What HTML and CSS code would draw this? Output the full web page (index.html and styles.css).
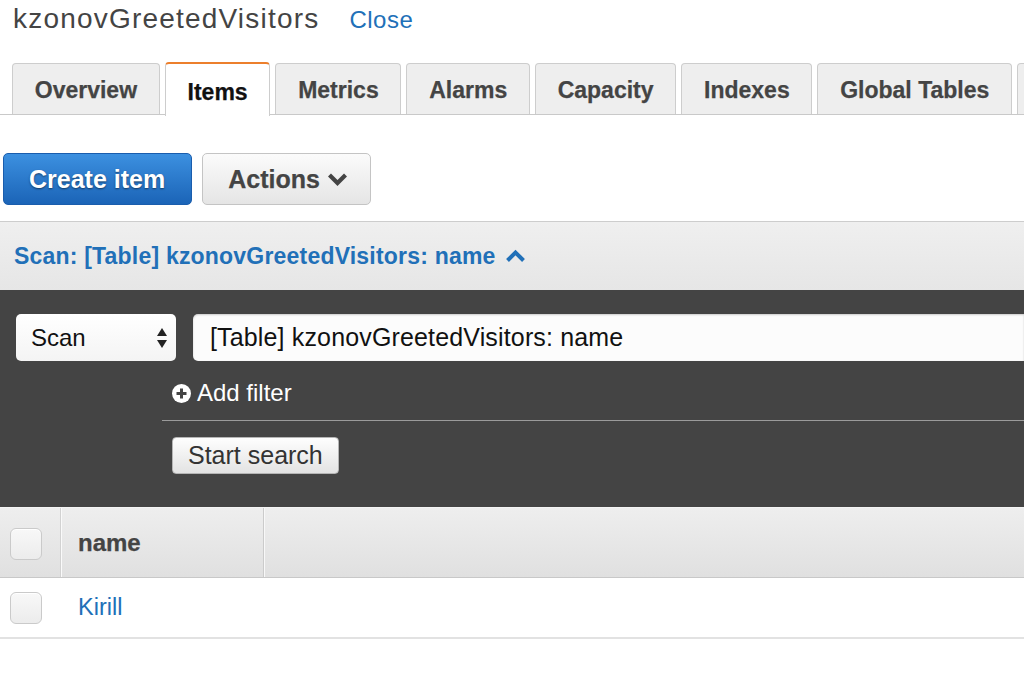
FILE: index.html
```html
<!DOCTYPE html>
<html>
<head>
<meta charset="utf-8">
<link rel="stylesheet" href="styles.css">
</head>
<body>
<header class="title-row">
  <h1 class="title">kzonovGreetedVisitors</h1>
  <a class="close">Close</a>
</header>
<nav class="tabs">
  <div class="tab">Overview</div>
  <div class="tab active">Items</div>
  <div class="tab">Metrics</div>
  <div class="tab">Alarms</div>
  <div class="tab">Capacity</div>
  <div class="tab">Indexes</div>
  <div class="tab">Global Tables</div>
  <div class="tab tab-more"></div>
</nav>
<div class="toolbar">
  <button class="btn btn-primary">Create item</button>
  <button class="btn btn-default">Actions
    <svg width="21" height="14" viewBox="0 0 21 14"><path d="M2.5 3 L10.5 11 L18.5 3" fill="none" stroke="#444" stroke-width="4.2"/></svg>
  </button>
</div>
<div class="query-bar">
  <span>Scan: [Table] kzonovGreetedVisitors: name</span>
  <svg width="21" height="14" viewBox="0 0 21 14"><path d="M2.5 11.5 L10.5 3.5 L18.5 11.5" fill="none" stroke="#2170b8" stroke-width="4"/></svg>
</div>
<div class="query-panel">
  <div class="query-row">
    <div class="select">
      <span>Scan</span>
      <svg width="10" height="20" viewBox="0 0 10 20"><path d="M5 0 L10 8 H0 Z M5 20 L10 12 H0 Z" fill="#222"/></svg>
    </div>
    <div class="input">[Table] kzonovGreetedVisitors: name</div>
  </div>
  <div class="filter-area">
    <div class="add-filter">
      <svg width="19" height="19" viewBox="0 0 19 19"><circle cx="9.5" cy="9.5" r="9.5" fill="#fff"/><path d="M9.5 4.5 V14.5 M4.5 9.5 H14.5" stroke="#444" stroke-width="3"/></svg>
      <span>Add filter</span>
    </div>
    <div class="search-row">
      <button class="btn-search">Start search</button>
    </div>
  </div>
</div>
<div class="grid">
  <div class="grid-head">
    <div class="cell cell-check"><span class="checkbox"></span></div>
    <div class="cell cell-name">name</div>
    <div class="cell cell-rest"></div>
  </div>
  <div class="grid-row">
    <div class="cell cell-check"><span class="checkbox"></span></div>
    <div class="cell cell-value">Kirill</div>
  </div>
</div>
</body>
</html>
```
FILE: styles.css
```css
html, body {
  margin: 0;
  padding: 0;
  background: #fff;
  overflow: hidden;
}
body {
  width: 1024px;
  height: 675px;
  font-family: "Liberation Sans", Arial, Helvetica, sans-serif;
}

/* title */
.title-row {
  display: flex;
  align-items: baseline;
  box-sizing: border-box;
  height: 63px;
  padding: 3px 0 0 13px;
}
.title {
  margin: 0;
  font-weight: normal;
  font-size: 28px;
  line-height: 32px;
  letter-spacing: 1.2px;
  color: #444;
}
.close {
  margin-left: 30px;
  font-size: 24px;
  letter-spacing: 0.5px;
  color: #2170b8;
}

/* tabs */
.tabs {
  display: flex;
  gap: 5px;
  height: 51px;
  padding-left: 12px;
  border-bottom: 1px solid #c9c9c9;
}
.tab {
  flex: 0 0 auto;
  box-sizing: border-box;
  height: 51px;
  padding: 3px 21.75px 0;
  border: 1px solid #cdcdcd;
  border-bottom: none;
  border-radius: 4px 4px 0 0;
  background: #eeeeee;
  display: flex;
  align-items: center;
  font-weight: bold;
  font-size: 23px;
  color: #444;
  white-space: nowrap;
  -webkit-text-stroke: 0.25px #444;
}
.tab.active {
  background: #fff;
  color: #111;
  -webkit-text-stroke: 0.25px #111;
  border-top: 2px solid #ec7f2c;
  margin-top: -1px;
  height: 54px;
  padding-top: 5px;
}
.tab-more {
  width: 60px;
}

/* toolbar */
.toolbar {
  display: flex;
  gap: 10px;
  padding-left: 3px;
  margin-top: 38px;
}
.btn {
  box-sizing: border-box;
  height: 52px;
  border-radius: 5px;
  font-family: inherit;
  font-weight: bold;
  font-size: 25px;
  line-height: 1;
  display: flex;
  align-items: center;
  margin: 0;
}
.btn-primary {
  padding: 0 26px 0 25px;
  background: linear-gradient(#3c90e0, #1b64b7);
  border: 1px solid #1a5dad;
  color: #fff;
  text-shadow: 0 1px 2px rgba(0, 0, 0, 0.5);
}
.btn-default {
  padding: 0 22px 0 25px;
  gap: 7px;
  background: linear-gradient(#fbfbfb, #e5e5e5);
  border: 1px solid #c4c4c4;
  color: #444;
  -webkit-text-stroke: 0.25px #444;
}

/* query bar */
.query-bar {
  margin-top: 16px;
  box-sizing: border-box;
  height: 69px;
  border-top: 1px solid #cdcdcd;
  background: linear-gradient(#efefef, #e6e6e6);
  display: flex;
  align-items: center;
  gap: 9px;
  padding-left: 14px;
  font-weight: bold;
  font-size: 23px;
  letter-spacing: 0.2px;
  color: #2170b8;
}

/* dark panel */
.query-panel {
  background: #444;
  padding: 24px 0 33px 16px;
}
.query-row {
  display: flex;
  gap: 17px;
}
.select {
  flex-shrink: 0;
  box-sizing: border-box;
  width: 160px;
  height: 47px;
  border-radius: 5px;
  background: linear-gradient(#ffffff, #f4f4f4);
  display: flex;
  align-items: center;
  justify-content: space-between;
  padding: 0 9px 0 15px;
  font-size: 24px;
  color: #111;
}
.input {
  flex: 1 1 auto;
  box-sizing: border-box;
  height: 47px;
  border-radius: 5px 0 0 5px;
  background: #fcfcfc;
  box-shadow: inset 0 1px 2px rgba(0, 0, 0, 0.2);
  display: flex;
  align-items: center;
  padding-left: 17px;
  font-size: 25px;
  letter-spacing: 0.15px;
  color: #111;
  white-space: nowrap;
}
.filter-area {
  margin-left: 146px;
}
.add-filter {
  display: flex;
  align-items: center;
  gap: 6px;
  margin: 19px 0 0 10px;
  height: 26px;
  font-size: 24px;
  color: #fff;
}
.search-row {
  margin-top: 14px;
  border-top: 1px solid #9b9b9b;
  padding: 16px 0 0 10px;
}
.btn-search {
  display: block;
  box-sizing: border-box;
  height: 37px;
  margin: 0;
  padding: 0 15px 0 15px;
  border: 1px solid #b5b5b5;
  border-radius: 4px;
  background: linear-gradient(#fefefe, #e3e3e3);
  font-family: inherit;
  font-size: 25px;
  line-height: 1;
  color: #333;
}

/* grid */
.grid-head {
  display: flex;
  box-sizing: border-box;
  height: 71px;
  border-top: 1px solid #f4f4f4;
  border-bottom: 1px solid #c8c8c8;
  background: linear-gradient(#eeeeee, #e0e0e0);
}
.cell {
  box-sizing: border-box;
  display: flex;
  align-items: center;
}
.cell-check {
  width: 62px;
  padding: 2px 0 0 10px;
}
.grid-head .cell-check {
  border-right: 1px solid #fafafa;
  box-shadow: inset -1px 0 0 #d2d2d2;
}
.cell-name {
  width: 202px;
  padding-left: 16px;
  border-right: 1px solid #cbcbcb;
  box-shadow: 1px 0 0 #f8f8f8;
  font-weight: bold;
  font-size: 24px;
  color: #444;
  -webkit-text-stroke: 0.25px #444;
}
.cell-rest {
  flex: 1;
}
.grid-row {
  display: flex;
  box-sizing: border-box;
  height: 61px;
  border-bottom: 2px solid #e2e2e2;
}
.grid-row .cell-check {
  padding-top: 0;
}
.cell-value {
  padding-left: 16px;
  font-size: 23.5px;
  color: #2170b8;
}
.checkbox {
  display: block;
  box-sizing: border-box;
  width: 32px;
  height: 32px;
  border: 1px solid #cacaca;
  border-radius: 6px;
  background: linear-gradient(#f8f8f8, #ececec);
  box-shadow: inset 0 1px 0 #fff;
}
```
